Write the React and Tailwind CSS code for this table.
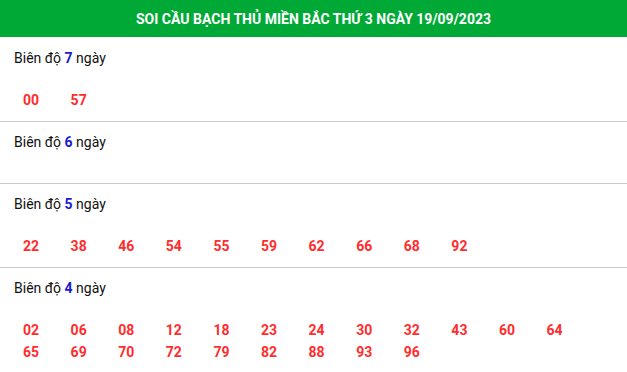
import React from "react";

const sections = [
  { d: "7", nums: ["00", "57"] },
  { d: "6", nums: [] },
  { d: "5", nums: ["22", "38", "46", "54", "55", "59", "62", "66", "68", "92"] },
  {
    d: "4",
    nums: ["02", "06", "08", "12", "18", "23", "24", "30", "32", "43", "60", "64", "65", "69", "70", "72", "79", "82", "88", "93", "96"],
  },
];

export default function App() {
  return (
    <div className="w-[627px] bg-white" style={{ fontFamily: "Roboto, 'Noto Sans', sans-serif" }}>
      <div className="h-[37px] bg-[#00a935] flex items-center justify-center">
        <h1 className="text-white font-bold text-[14px] leading-none">SOI CẦU BẠCH THỦ MIỀN BẮC THỨ 3 NGÀY 19/09/2023</h1>
      </div>
      {sections.map((s, i) => (
        <div key={s.d} className={`${i === 0 ? "pt-[12px]" : "pt-[11px]"} border-b border-[#c8c8c8]`}>
          <div className="pl-[14px] text-[14px] leading-[18px] text-[#111]">
            Biên độ <span className="font-bold text-[#1a1acc]">{s.d}</span> ngày
          </div>
          <div className="mt-[22px] pb-[10px] pl-[23px] flex flex-wrap min-h-[1px]">
            {s.nums.map((n) => (
              <span key={n} className="w-[47.6px] text-[14px] leading-[22px] font-bold text-[#ff2d2d]">
                {n}
              </span>
            ))}
          </div>
        </div>
      ))}
    </div>
  );
}
